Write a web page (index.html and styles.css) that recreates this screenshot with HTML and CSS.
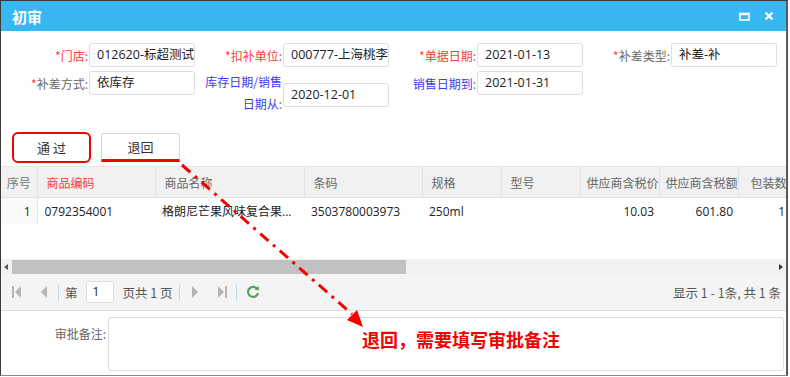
FILE: index.html
```html
<!DOCTYPE html>
<html lang="zh-CN">

<head>
    <meta charset="UTF-8">
    <title>初审</title>
    <link rel="stylesheet" href="styles.css">
</head>

<body>
    <div class="window">
        <div class="title-bar">
            <span class="title">初审</span>
            <span class="tools">
                <svg class="tool" width="11" height="9" viewBox="0 0 11 9">
                    <rect x="1" y="1.5" width="9" height="6.5" fill="none" stroke="#fff" stroke-width="1.6" />
                    <rect x="1" y="1" width="9" height="2.2" fill="#fff" />
                </svg>
                <svg class="tool" width="10" height="10" viewBox="0 0 10 10">
                    <path d="M1.5 1.5 L8.5 8.5 M8.5 1.5 L1.5 8.5" stroke="#fff" stroke-width="2.3" />
                </svg>
            </span>
        </div>

        <div class="form">
            <div class="form-row">
                <div class="field">
                    <label class="label red"><span class="star">*</span>门店<span class="colon">:</span></label>
                    <div class="input">012620-标超测试</div>
                </div>
                <div class="field">
                    <label class="label red"><span class="star">*</span>扣补单位<span class="colon">:</span></label>
                    <div class="input">000777-上海桃李食品</div>
                </div>
                <div class="field">
                    <label class="label red"><span class="star">*</span>单据日期<span class="colon">:</span></label>
                    <div class="input">2021-01-13</div>
                </div>
                <div class="field">
                    <label class="label"><span class="star">*</span>补差类型<span class="colon">:</span></label>
                    <div class="input">补差-补</div>
                </div>
            </div>
            <div class="form-row">
                <div class="field">
                    <label class="label"><span class="star">*</span>补差方式<span class="colon">:</span></label>
                    <div class="input">依库存</div>
                </div>
                <div class="field tall">
                    <label class="label blue">库存日期/销售<br>日期从<span class="colon">:</span></label>
                    <div class="input">2020-12-01</div>
                </div>
                <div class="field">
                    <label class="label blue">销售日期到<span class="colon">:</span></label>
                    <div class="input">2021-01-31</div>
                </div>
            </div>
        </div>

        <div class="actions">
            <button class="btn marked">通 过</button>
            <button class="btn underlined">退回</button>
        </div>

        <div class="grid">
            <table class="grid-table">
                <colgroup>
                    <col style="width: 36px">
                    <col style="width: 118px">
                    <col style="width: 149px">
                    <col style="width: 118px">
                    <col style="width: 79px">
                    <col style="width: 79px">
                    <col style="width: 79px">
                    <col style="width: 79px">
                    <col style="width: 52px">
                </colgroup>
                <thead>
                    <tr>
                        <th class="num">序号</th>
                        <th class="key">商品编码</th>
                        <th>商品名称</th>
                        <th>条码</th>
                        <th>规格</th>
                        <th>型号</th>
                        <th class="right">供应商含税价</th>
                        <th class="right">供应商含税额</th>
                        <th class="pack">包装数</th>
                    </tr>
                </thead>
                <tbody>
                    <tr>
                        <td class="num">1</td>
                        <td>0792354001</td>
                        <td>格朗尼芒果风味复合果...</td>
                        <td>3503780003973</td>
                        <td>250ml</td>
                        <td></td>
                        <td class="right">10.03</td>
                        <td class="right">601.80</td>
                        <td class="right">1</td>
                    </tr>
                </tbody>
            </table>
        </div>

        <div class="scrollbar">
            <span class="arrow-left"></span>
            <span class="thumb"></span>
            <span class="arrow-right"></span>
        </div>

        <div class="pager">
            <svg class="pg-first" width="10" height="14" viewBox="0 0 10 14">
                <rect x="0" y="1" width="2" height="12" fill="#b4b4b4" />
                <path d="M9 1 L3 7 L9 13 Z" fill="#b4b4b4" />
            </svg>
            <svg class="pg-prev" width="8" height="14" viewBox="0 0 8 14">
                <path d="M7 1 L1 7 L7 13 Z" fill="#b4b4b4" />
            </svg>
            <span class="sep sep-1"></span>
            <span class="pg-text pg-label">第</span>
            <span class="pg-input">1</span>
            <span class="pg-text">页共 1 页</span>
            <span class="sep sep-2"></span>
            <svg class="pg-next" width="8" height="14" viewBox="0 0 8 14">
                <path d="M1 1 L7 7 L1 13 Z" fill="#b4b4b4" />
            </svg>
            <svg class="pg-last" width="10" height="14" viewBox="0 0 10 14">
                <path d="M1 1 L7 7 L1 13 Z" fill="#b4b4b4" />
                <rect x="8" y="1" width="2" height="12" fill="#b4b4b4" />
            </svg>
            <span class="sep sep-3"></span>
            <svg class="pg-refresh" width="14" height="14" viewBox="0 0 14 14">
                <path d="M11.3 4.2 A5 5 0 1 0 12 8" fill="none" stroke="#52a552" stroke-width="2.2" />
                <path d="M8.5 4.6 L13 5.6 L12.6 1 Z" fill="#52a552" />
            </svg>
            <span class="pg-info">显示 1 - 1条, 共 1 条</span>
        </div>

        <div class="remarks">
            <label class="remarks-label">审批备注:</label>
            <div class="textarea"></div>
        </div>
    </div>

    <svg class="annotation" width="790" height="377" viewBox="0 0 790 377">
        <line x1="182" y1="165" x2="352" y2="314" stroke="#f40000" stroke-width="3" stroke-dasharray="11 6 3 6" />
        <path d="M363 327 L347 320 L357 310 Z" fill="#f40000" />
    </svg>
    <div class="note">退回，需要填写审批备注</div>
</body>

</html>
```

FILE: styles.css
```css
body {
    margin: 0;
    width: 790px;
    height: 377px;
    background: #fff;
    font-family: "Open Sans", "Noto Sans CJK SC", sans-serif;
    font-size: 12px;
    color: #222;
    position: relative;
    overflow: hidden;
}

.window {
    width: 788px;
    height: 376px;
    box-sizing: border-box;
    border-left: 1px solid #3a3a3a;
    border-top: 1px solid #3a3a3a;
    border-right: 2px solid #5a5a5a;
    border-bottom: 1px solid #8a8a8a;
    display: flex;
    flex-direction: column;
}

/* title */
.title-bar {
    height: 30px;
    flex-shrink: 0;
    background: #38b8f2;
    display: flex;
    align-items: center;
    justify-content: space-between;
    padding: 0 12px 0 11px;
}

.title {
    color: #fff;
    font-family: "Noto Sans CJK SC", sans-serif;
    font-weight: bold;
    font-size: 15px;
}

.tools {
    display: flex;
    align-items: center;
    gap: 14px;
}

/* form */
.form {
    padding-top: 12px;
    display: flex;
    flex-direction: column;
    gap: 4px;
}

.form-row {
    display: flex;
    align-items: flex-start;
}

.field {
    width: 194px;
    display: flex;
    align-items: center;
    gap: 1px;
}

.label {
    width: 87px;
    flex-shrink: 0;
    text-align: right;
    font-family: "Noto Sans CJK SC", sans-serif;
    color: #666;
    white-space: nowrap;
}

.label.red {
    color: #ff3a3a;
}

.label.blue {
    color: #3b3bf2;
}

.star {
    color: #ff3a3a;
}

.colon {
    color: #777;
}

.input {
    width: 106px;
    height: 24px;
    box-sizing: border-box;
    border: 1px solid #dedede;
    border-radius: 3px;
    padding: 0 0 0 7px;
    font-size: 12.5px;
    line-height: 22px;
    color: #222;
    white-space: nowrap;
    overflow: hidden;
}

.field.tall {
    align-items: flex-start;
}

.field.tall .label {
    line-height: 22px;
}

.field.tall .input {
    margin-top: 12px;
}

/* buttons */
.actions {
    margin-top: 18px;
    height: 30px;
    display: flex;
    align-items: flex-start;
    gap: 10px;
    padding-left: 11px;
}

.btn {
    width: 79px;
    height: 29px;
    background: #fff;
    border: 1px solid #d6d6d6;
    border-radius: 3px;
    font-family: "Noto Sans CJK SC", sans-serif;
    font-size: 13px;
    color: #333;
    padding: 0;
}

.btn.marked {
    height: 31px;
    margin-top: -1px;
    border: 2.5px solid #f40000;
    border-radius: 6px;
}

.btn.underlined {
    border-bottom: 3px solid #f40000;
    border-radius: 3px 3px 0 0;
}

/* grid */
.grid {
    margin-top: 3px;
    height: 93px;
    overflow: hidden;
}

.grid-table {
    border-collapse: collapse;
    table-layout: fixed;
    width: 789px;
}

.grid-table th {
    height: 30px;
    background: #f1f1f1;
    border-top: 1px solid #e6e6e6;
    border-right: 1px solid #e2e2e2;
    border-bottom: 1px solid #e2e2e2;
    font-family: "Noto Sans CJK SC", sans-serif;
    font-weight: normal;
    color: #666;
    text-align: left;
    padding: 0 0 0 9px;
    white-space: nowrap;
    overflow: hidden;
}

.grid-table td {
    height: 26px;
    padding: 0 0 0 7px;
    white-space: nowrap;
    overflow: hidden;
    color: #222;
}

.grid-table th.num {
    text-align: center;
    padding: 0;
    color: #777;
}

.grid-table td.num {
    text-align: right;
    padding: 0 6px 0 0;
    background: #fafafa;
    border-right: 1px solid #e6e6e6;
}

.grid-table th.key {
    color: #ff3a3a;
}

.grid-table th.right {
    text-align: right;
    padding: 0;
}

.grid-table td.right {
    text-align: right;
    padding: 0 5px 0 0;
}

.grid-table th.pack {
    padding-left: 12px;
}

/* scrollbar */
.scrollbar {
    height: 15px;
    flex-shrink: 0;
    background: #f1f1f1;
    display: flex;
    align-items: center;
}

.arrow-left {
    width: 0;
    height: 0;
    margin: 0 4px 0 3px;
    border-top: 3px solid transparent;
    border-bottom: 3px solid transparent;
    border-right: 4px solid #555;
}

.thumb {
    width: 394px;
    height: 14px;
    background: #c1c1c1;
}

.arrow-right {
    width: 0;
    height: 0;
    margin-left: auto;
    margin-right: 3px;
    border-top: 3px solid transparent;
    border-bottom: 3px solid transparent;
    border-left: 4px solid #333;
}

/* pager */
.pager {
    height: 37px;
    flex-shrink: 0;
    box-sizing: border-box;
    background: #f4f4f4;
    border-bottom: 1px solid #e0e0e0;
    display: flex;
    align-items: center;
    padding: 0 5px 0 11px;
    font-family: "Noto Sans CJK SC", sans-serif;
    color: #555;
}

.pg-prev {
    margin-left: 18px;
}

.sep {
    width: 1px;
    height: 17px;
    background: #bcd8ef;
}

.sep-1 {
    margin-left: 10px;
}

.pg-label {
    margin-left: 6px;
}

.sep-2 {
    margin-left: 6px;
}

.pg-next {
    margin-left: 11px;
}

.pg-last {
    margin-left: 18px;
}

.sep-3 {
    margin-left: 9px;
}

.pg-refresh {
    margin-left: 9px;
}

.pg-text {
    font-size: 12.5px;
}

.pg-input {
    width: 28px;
    height: 22px;
    box-sizing: border-box;
    margin: 0 9px 0 8px;
    background: #fff;
    border: 1px solid #ddd;
    border-radius: 3px;
    padding-left: 6px;
    line-height: 20px;
    font-family: "Open Sans", sans-serif;
    color: #222;
}

.pg-info {
    margin-left: auto;
    font-size: 12.5px;
}

/* remarks */
.remarks {
    flex: 1;
    display: flex;
    align-items: flex-start;
    padding: 6px 2px 3px 0;
}

.remarks-label {
    width: 105px;
    text-align: right;
    margin-top: 8px;
    margin-right: 2px;
    font-family: "Noto Sans CJK SC", sans-serif;
    color: #666;
}

.textarea {
    flex: 1;
    height: 54px;
    box-sizing: border-box;
    border: 1px solid #dedede;
    border-radius: 3px;
}

/* red annotation drawn over the form */
.annotation {
    position: absolute;
    left: 0;
    top: 0;
    pointer-events: none;
}

.note {
    position: absolute;
    left: 362px;
    top: 326px;
    font-family: "Noto Sans CJK SC", sans-serif;
    font-weight: bold;
    font-size: 18px;
    line-height: 26px;
    color: #f40000;
    white-space: nowrap;
}
```
